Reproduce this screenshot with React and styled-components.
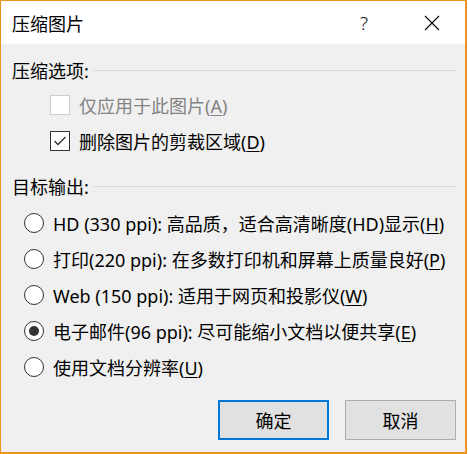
import React from "react";
import styled, { createGlobalStyle } from "styled-components";

const GlobalStyle = createGlobalStyle`
  html, body {
    margin: 0;
    padding: 0;
    background: #ffffff;
  }
  body {
    font-family: "Noto Sans", "Noto Sans CJK SC", sans-serif;
  }
`;

const checkOptions = [
  { label: "仅应用于此图片", key: "A", checked: false, disabled: true },
  { label: "删除图片的剪裁区域", key: "D", checked: true, disabled: false },
];

const outputOptions = [
  { label: "HD (330 ppi): 高品质，适合高清晰度(HD)显示", key: "H" },
  { label: "打印(220 ppi): 在多数打印机和屏幕上质量良好", key: "P" },
  { label: "Web (150 ppi): 适用于网页和投影仪", key: "W" },
  { label: "电子邮件(96 ppi): 尽可能缩小文档以便共享", key: "E", selected: true },
  { label: "使用文档分辨率", key: "U" },
];

export default function App() {
  return (
    <>
      <GlobalStyle />
      <Window>
        <TitleBar>
          <Title>压缩图片</Title>
          <TitleButton>?</TitleButton>
          <TitleButton>
            <svg width="16" height="16" viewBox="0 0 16 16">
              <path d="M1 1 L15 15 M15 1 L1 15" stroke="#000" strokeWidth="1.1" />
            </svg>
          </TitleButton>
        </TitleBar>
        <Body>
          <GroupLabel>
            <span>压缩选项:</span>
            <Rule />
          </GroupLabel>
          <List $indent={38} $top={5}>
            {checkOptions.map((o) => (
              <Row key={o.key}>
                <CheckBox $disabled={o.disabled}>
                  {o.checked && (
                    <svg width="18" height="18" viewBox="0 0 18 18">
                      <path d="M3.5 9 L7 12.5 L14.5 5" fill="none" stroke="#333" strokeWidth="1.4" />
                    </svg>
                  )}
                </CheckBox>
                <RowText $disabled={o.disabled}>
                  {o.label}(<u>{o.key}</u>)
                </RowText>
              </Row>
            ))}
          </List>
          <GroupLabel $top={15}>
            <span>目标输出:</span>
            <Rule />
          </GroupLabel>
          <List $indent={12} $top={7}>
            {outputOptions.map((o) => (
              <Row key={o.key}>
                <Radio>{o.selected && <Dot />}</Radio>
                <RowText>
                  {o.label}(<u>{o.key}</u>)
                </RowText>
              </Row>
            ))}
          </List>
          <Buttons>
            <Button $primary>确定</Button>
            <Button>取消</Button>
          </Buttons>
        </Body>
      </Window>
    </>
  );
}

const Window = styled.div`
  width: 467px;
  height: 454px;
  box-sizing: border-box;
  border: solid #ec9320;
  border-width: 1px 2px 2px 1px;
  display: flex;
  flex-direction: column;
  background: #f0f0f0;
  color: #000;
`;

const TitleBar = styled.div`
  height: 43px;
  flex-shrink: 0;
  background: #ffffff;
  display: flex;
  align-items: center;
  padding-left: 11px;
`;

const Title = styled.div`
  flex: 1;
  font-size: 18px;
  line-height: 1;
  margin-top: 2px;
`;

const TitleButton = styled.div`
  width: 68px;
  height: 43px;
  display: flex;
  align-items: center;
  justify-content: center;
  font-size: 19px;
  font-weight: 300;
  color: #111;

  &:last-child {
    width: 67px;
  }
`;

const Body = styled.div`
  flex: 1;
  padding: 14px 9px 0 11px;
  display: flex;
  flex-direction: column;
`;

const GroupLabel = styled.div`
  height: 24px;
  margin-top: ${(p) => p.$top || 0}px;
  display: flex;
  align-items: center;
  font-size: 18px;
  gap: 5px;
`;

const Rule = styled.div`
  flex: 1;
  height: 1px;
  background: #dadada;
`;

const List = styled.div`
  padding-left: ${(p) => p.$indent}px;
  padding-top: ${(p) => p.$top}px;
  display: flex;
  flex-direction: column;
`;

const Row = styled.div`
  height: 36px;
  display: flex;
  align-items: center;
  gap: 9px;
`;

const CheckBox = styled.div`
  width: 20px;
  height: 20px;
  flex-shrink: 0;
  box-sizing: border-box;
  border: 1px solid ${(p) => (p.$disabled ? "#cccccc" : "#333333")};
  background: #fff;
  display: flex;
  align-items: center;
  justify-content: center;
`;

const Radio = styled.div`
  width: 20px;
  height: 20px;
  flex-shrink: 0;
  box-sizing: border-box;
  border: 1px solid #333;
  border-radius: 50%;
  background: #fff;
  display: flex;
  align-items: center;
  justify-content: center;
`;

const Dot = styled.div`
  width: 10px;
  height: 10px;
  border-radius: 50%;
  background: #333;
`;

const RowText = styled.div`
  font-size: 18px;
  white-space: nowrap;
  color: ${(p) => (p.$disabled ? "#838383" : "#000")};

  u {
    text-underline-offset: 2px;
  }
`;

const Buttons = styled.div`
  margin-top: 15px;
  display: flex;
  justify-content: flex-end;
  gap: 16px;
`;

const Button = styled.div`
  width: 111px;
  height: 40px;
  box-sizing: border-box;
  border: ${(p) => (p.$primary ? "2px solid #0078d7" : "1px solid #adadad")};
  background: #e1e1e1;
  display: flex;
  align-items: center;
  justify-content: center;
  font-size: 18px;
  color: #000;
`;
